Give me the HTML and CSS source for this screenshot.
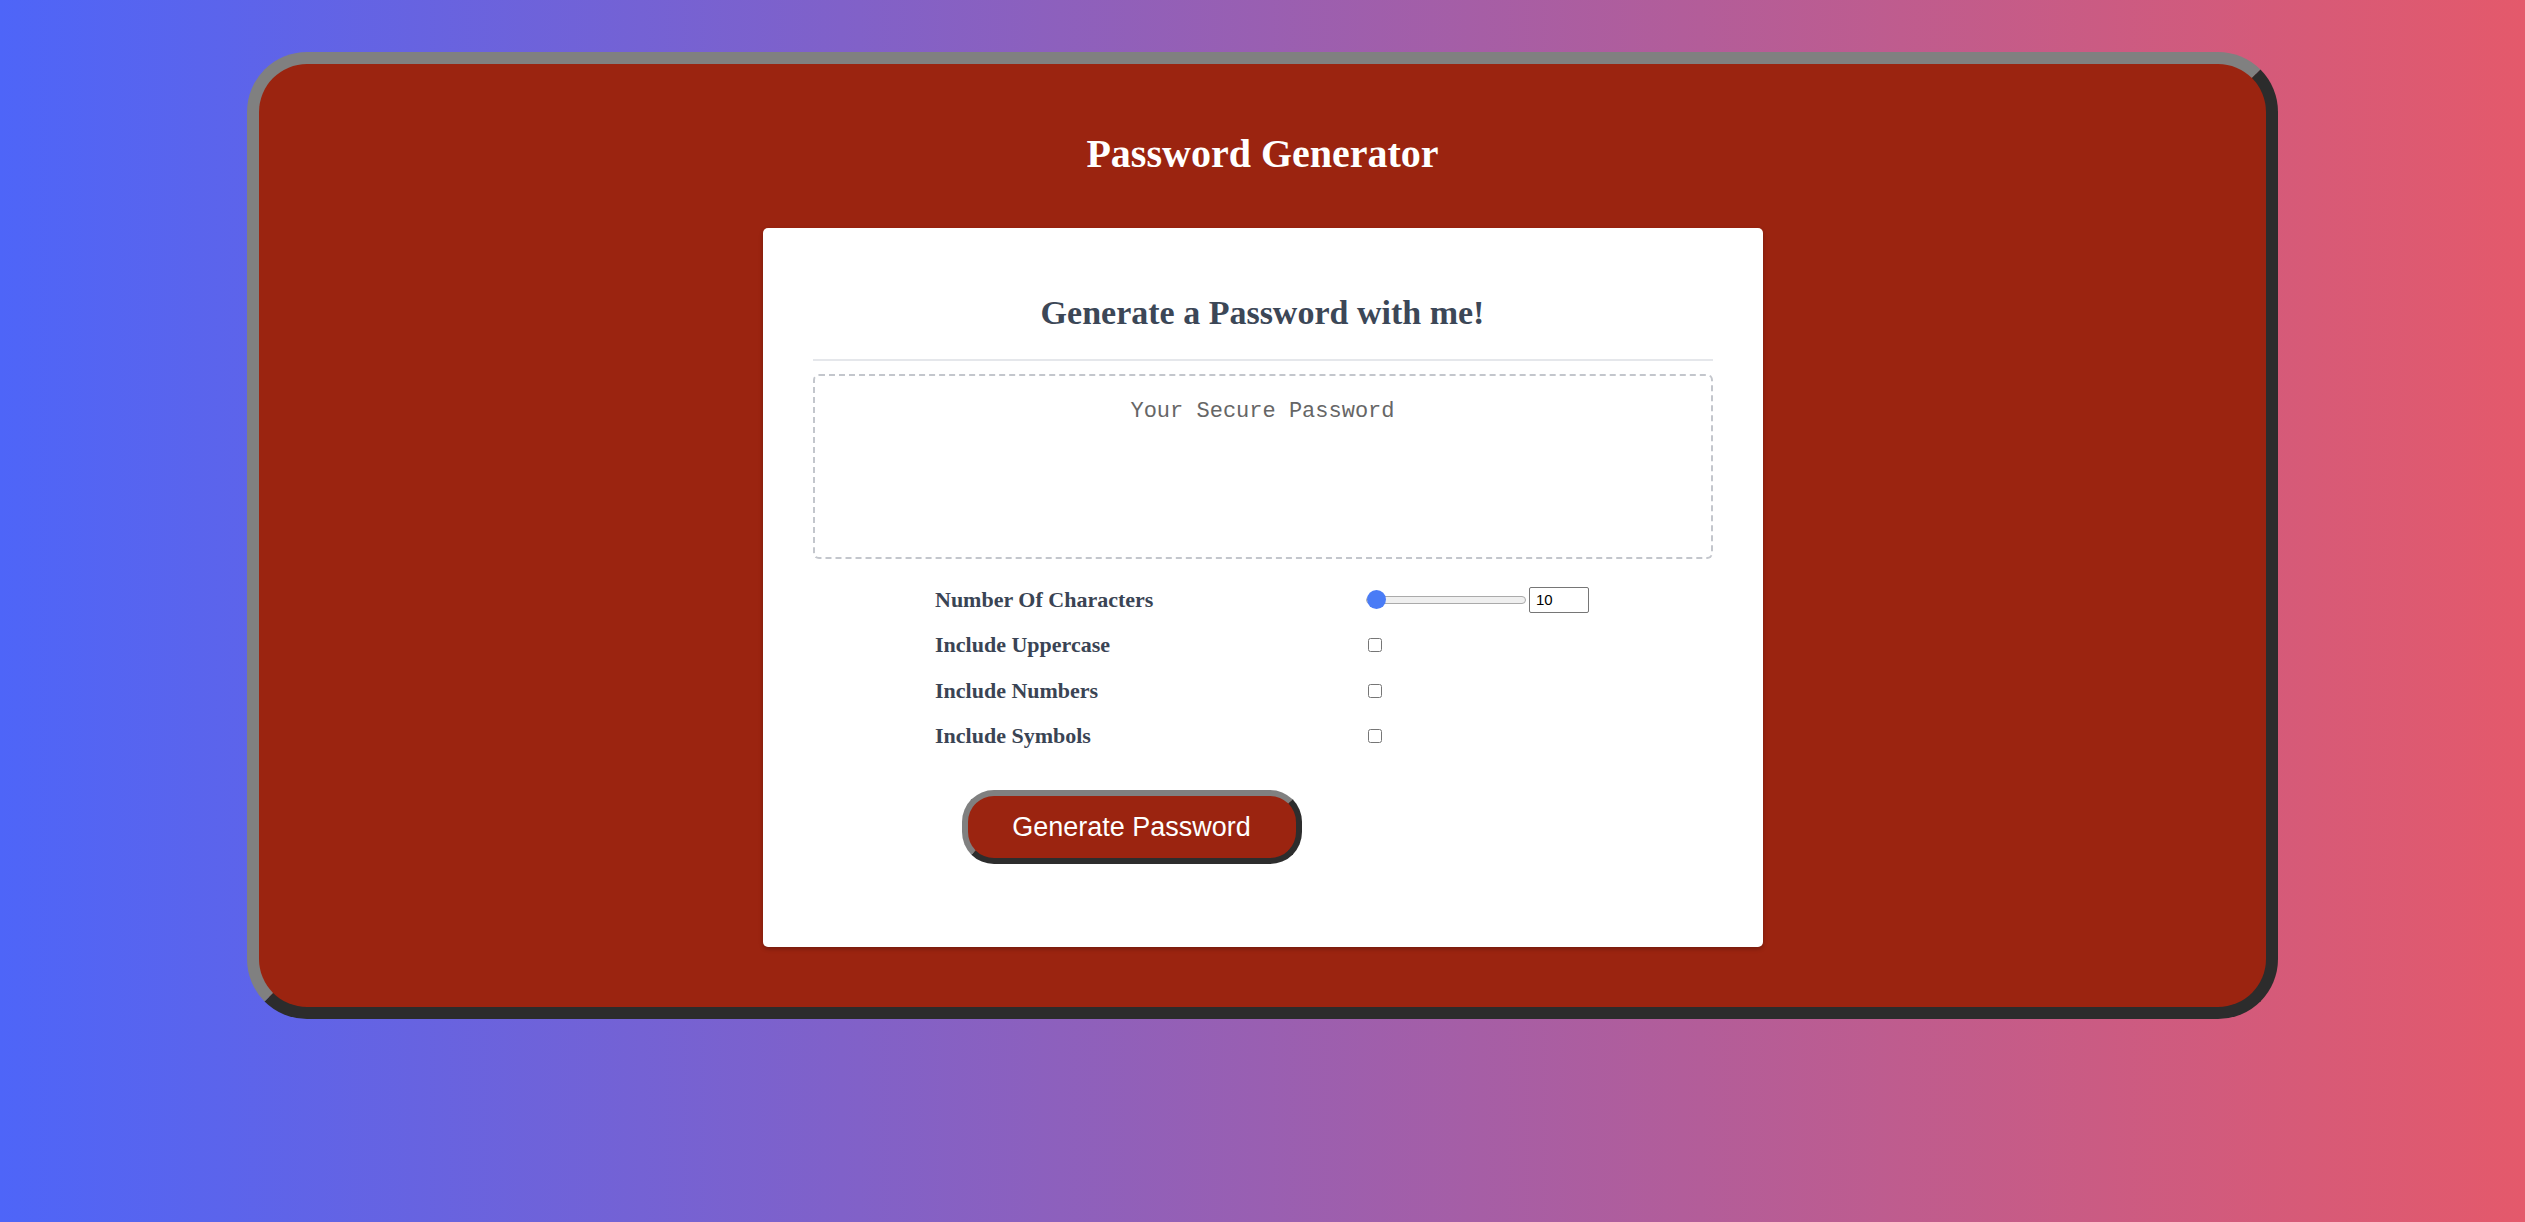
FILE: index.html
```html
<!DOCTYPE html>
<html lang="en">
<head>
<meta charset="utf-8">
<title>Password Generator</title>
<link rel="stylesheet" href="styles.css">
</head>
<body>
  <main class="app">
    <h1 class="app-title">Password Generator</h1>
    <section class="card">
      <h2 class="card-title">Generate a Password with me!</h2>
      <hr class="divider">
      <div class="password-display"><span class="password-placeholder">Your Secure Password</span></div>
      <div class="options">
        <label class="option-label" for="length">Number Of Characters</label>
        <div class="option-control">
          <input type="range" id="length" class="slider" min="10" max="100" value="10">
          <input type="number" class="length-input" min="10" max="100" value="10">
        </div>
        <label class="option-label" for="upper">Include Uppercase</label>
        <div class="option-control"><input type="checkbox" id="upper" class="check"></div>
        <label class="option-label" for="numbers">Include Numbers</label>
        <div class="option-control"><input type="checkbox" id="numbers" class="check"></div>
        <label class="option-label" for="symbols">Include Symbols</label>
        <div class="option-control"><input type="checkbox" id="symbols" class="check"></div>
      </div>
      <div class="actions">
        <button type="button" class="generate-btn">Generate Password</button>
      </div>
    </section>
  </main>
</body>
</html>
```

FILE: styles.css
```css
html {
  min-height: 100%;
  background: linear-gradient(to right, #4e65f8, #e4596b);
}

body {
  margin: 8px;
  min-height: calc(100vh - 16px);
  font-family: "Liberation Serif", "Times New Roman", serif;
}

.app {
  width: 80%;
  margin: 44px auto 0;
  padding: 66px 0 60px;
  background: #9b2410;
  border: 12px solid;
  border-color: #808080 #2c2c2c #2c2c2c #808080;
  border-radius: 60px;
  display: flex;
  flex-direction: column;
  align-items: center;
}

.app-title {
  margin: 0 0 51px;
  font-size: 40px;
  font-weight: bold;
  line-height: normal;
  color: #ffffff;
  text-align: center;
}

.card {
  box-sizing: border-box;
  width: 1000px;
  padding: 66px 50px 83px;
  background: #ffffff;
  border-radius: 5px;
  box-shadow: 0 2px 4px rgba(0, 0, 0, 0.25);
}

.card-title {
  margin: 0;
  font-size: 34px;
  font-weight: bold;
  line-height: normal;
  color: #3c4757;
  text-align: center;
}

.divider {
  height: 2px;
  margin: 27px 0 13px;
  border: 0;
  background: #e5e7eb;
}

.password-display {
  box-sizing: border-box;
  height: 185px;
  padding-top: 23px;
  border: 2px dashed #c3c6cc;
  border-radius: 6px;
  text-align: center;
}

.password-placeholder {
  font-family: "Liberation Mono", "DejaVu Sans Mono", monospace;
  font-size: 22px;
  color: #666666;
}

.options {
  display: grid;
  grid-template-columns: 429px 226px;
  grid-auto-rows: 45.5px;
  justify-content: center;
  align-items: center;
  margin-top: 18px;
}

.option-label {
  font-size: 22px;
  font-weight: bold;
  color: #3a4454;
}

.option-control {
  display: flex;
  align-items: center;
}

.slider {
  -webkit-appearance: none;
  appearance: none;
  width: 160px;
  height: 19px;
  margin: 0 3px 0 2px;
  padding: 0;
  background: transparent;
}

.slider::-webkit-slider-runnable-track {
  height: 8px;
  background: #efefef;
  border: 1px solid #aaaaaa;
  border-radius: 5px;
}

.slider::-webkit-slider-thumb {
  -webkit-appearance: none;
  appearance: none;
  width: 19px;
  height: 19px;
  margin-top: -6.5px;
  border: none;
  border-radius: 50%;
  background: #4a7cf6;
}

.length-input {
  box-sizing: border-box;
  width: 60px;
  height: 26px;
  margin: 0;
  padding: 1px 6px;
  border: 1px solid #767676;
  border-radius: 2px;
  font-family: "Liberation Sans", Arial, sans-serif;
  font-size: 15px;
  font-weight: normal;
  color: #000000;
}

.check {
  width: 14px;
  height: 14px;
  margin: 3px 3px 3px 4px;
}

.actions {
  display: flex;
  margin-top: 31px;
  padding-left: 149px;
}

.generate-btn {
  box-sizing: border-box;
  width: 340px;
  height: 74px;
  padding: 0;
  background: #9b2410;
  border: 6px solid;
  border-color: #808080 #2d2d2d #2d2d2d #808080;
  border-radius: 32px;
  font-family: "Liberation Sans", Arial, sans-serif;
  font-size: 27px;
  color: #ffffff;
  cursor: pointer;
}
```
